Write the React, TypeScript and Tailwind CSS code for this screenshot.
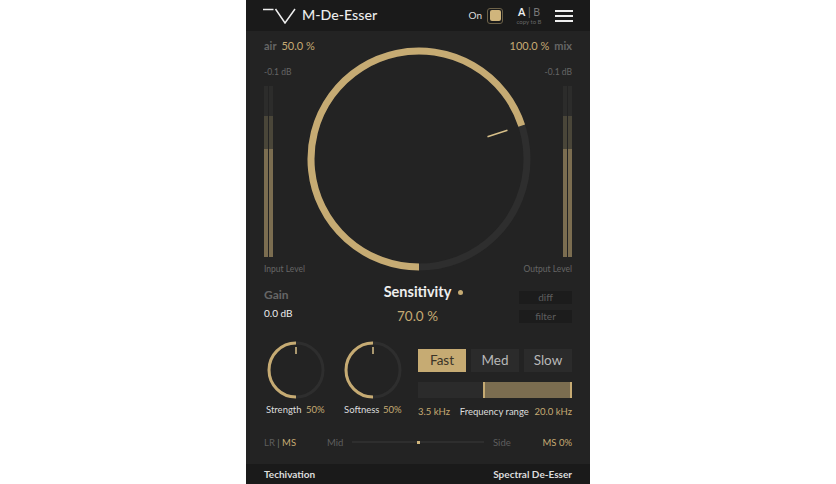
import React from 'react'

const GOLD = '#c6ab73'

// ring drawn clockwise from the bottom, value is 0..1
function Ring({ size, radius, stroke, value, track, tick }: { size: number; radius: number; stroke: number; value: number; track: string; tick: [number, number] }) {
  const c = size / 2
  const a = value * 2 * Math.PI
  const x = c - radius * Math.sin(a)
  const y = c + radius * Math.cos(a)
  const large = value > 0.5 ? 1 : 0
  const tx = (r: number) => c - r * Math.sin(a)
  const ty = (r: number) => c + r * Math.cos(a)
  return (
    <svg width={size} height={size} className="block shrink-0">
      <circle cx={c} cy={c} r={radius} fill="none" stroke={track} strokeWidth={stroke} />
      <path d={`M ${c} ${c + radius} A ${radius} ${radius} 0 ${large} 1 ${x} ${y}`} fill="none" stroke={GOLD} strokeWidth={stroke} />
      <line x1={tx(tick[0])} y1={ty(tick[0])} x2={tx(tick[1])} y2={ty(tick[1])} stroke="#d8c08a" strokeWidth={1.5} />
    </svg>
  )
}

function Meter() {
  const bar = (
    <div className="flex h-[171px] w-1 flex-col">
      <div className="h-[30px] bg-[#2c2c2b]" />
      <div className="h-[33px] bg-[#4a4639]" />
      <div className="flex-1 bg-[#7b6d50]" />
    </div>
  )
  return (
    <div className="flex gap-px">
      {bar}
      {bar}
    </div>
  )
}

function SpeedButton({ label, active }: { label: string; active?: boolean }) {
  return (
    <div className={`flex h-[23px] w-12 items-center justify-center text-[13.5px] ${active ? 'bg-[#c6ab73] text-[#3a3428]' : 'bg-[#2b2b2b] text-[#b8b8b8]'}`}>
      {label}
    </div>
  )
}

export default function App() {
  return (
    <div className="flex h-[484px] w-[836px] justify-center overflow-hidden bg-white font-['Lato','Liberation_Sans',sans-serif]">
      <div className="flex w-[344px] flex-col bg-[#232323]">
        {/* header */}
        <div className="flex h-[31px] items-center bg-[#1a1a1a] pl-[17px] pr-[17px]">
          <svg width="33" height="16" viewBox="0 0 33 16" className="shrink-0">
            <path d="M0 1.5H10.5" stroke="#eee" strokeWidth="1.5" fill="none" />
            <path d="M12.5 1 L22 15 L32 1" stroke="#eee" strokeWidth="1.5" fill="none" />
          </svg>
          <div className="ml-[6px] text-[14.2px] font-medium leading-none text-[#ececec]">M-De-Esser</div>
          <div className="ml-auto text-[10px] text-[#ddd]">On</div>
          <div className="ml-[5px] flex h-[16px] w-[16px] items-center justify-center rounded-[3px] border border-[#6d6249] bg-[#1a1a1a]">
            <div className="h-[11px] w-[11px] rounded-[2px] bg-[#d0b57c]" />
          </div>
          <div className="ml-[13px] flex w-[26px] flex-col items-center">
            <div className="text-[10.5px] leading-[12px] text-[#777]">
              <span className="font-bold text-[#eee]">A</span> | B
            </div>
            <div className="whitespace-nowrap text-[6px] leading-[8px] text-[#666]">copy to B</div>
          </div>
          <div className="ml-[13px] flex w-[18px] flex-col gap-[3px]">
            <div className="h-[2px] bg-[#eee]" />
            <div className="h-[2px] bg-[#eee]" />
            <div className="h-[2px] bg-[#eee]" />
          </div>
        </div>

        {/* main knob + meters */}
        <div className="flex justify-between px-[18px] pt-[8px]">
          <div className="relative z-10 flex w-[42px] flex-col">
            <div className="h-[14px] whitespace-nowrap text-[11px] leading-[14px]">
              <span className="font-bold text-[#666]">air</span>
              <span className="ml-[5px] text-[#c6ab73]">50.0 %</span>
            </div>
            <div className="mt-[13px] h-[12px] whitespace-nowrap text-[8.5px] leading-[12px] text-[#666]">-0.1 dB</div>
            <div className="mt-[8px]"><Meter /></div>
            <div className="mt-[6px] whitespace-nowrap text-[8.5px] leading-[12px] text-[#666]">Input Level</div>
          </div>
          <div className="pt-[8px]">
            <Ring size={224} radius={108} stroke={7} value={0.7} track="#2e2e2e" tick={[72, 93]} />
          </div>
          <div className="relative z-10 flex w-[41px] flex-col items-end">
            <div className="h-[14px] whitespace-nowrap text-[11px] leading-[14px]">
              <span className="text-[#c6ab73]">100.0 %</span>
              <span className="ml-[5px] font-bold text-[#666]">mix</span>
            </div>
            <div className="mt-[13px] h-[12px] whitespace-nowrap text-[8.5px] leading-[12px] text-[#666]">-0.1 dB</div>
            <div className="mt-[8px]"><Meter /></div>
            <div className="mt-[6px] whitespace-nowrap text-[8.5px] leading-[12px] text-[#666]">Output Level</div>
          </div>
        </div>

        {/* sensitivity row */}
        <div className="mt-[8px] flex h-[42px] justify-between px-[18px]">
          <div className="flex w-[60px] flex-col pt-[3px]">
            <div className="text-[12px] font-bold leading-[18px] text-[#666]">Gain</div>
            <div className="mt-[2px] text-[10px] leading-[14px] text-[#eee]">0.0 dB</div>
          </div>
          <div className="flex flex-col items-center pl-[4px]">
            <div className="flex items-center">
              <span className="text-[14.5px] font-bold leading-[18px] text-[#eee]">Sensitivity</span>
              <span className="ml-[7px] h-[5px] w-[5px] rounded-full bg-[#c6ab73]" />
            </div>
            <div className="mt-[6px] pr-[12px] text-[13.5px] leading-[18px] text-[#c6ab73]">70.0 %</div>
          </div>
          <div className="flex w-[53px] flex-col gap-[6px] pt-[8px]">
            <div className="flex h-[13px] items-center justify-center bg-[#1c1c1c] text-[10px] text-[#5e5e5e]">diff</div>
            <div className="flex h-[13px] items-center justify-center bg-[#1c1c1c] text-[10px] text-[#5e5e5e]">filter</div>
          </div>
        </div>

        {/* small knobs + range */}
        <div className="mt-[15px] flex px-[18px]">
          <div className="flex w-[78px] flex-col">
            <div className="pl-[2px]"><Ring size={60} radius={27} stroke={3} value={0.5} track="#2e2e2e" tick={[16, 23]} /></div>
            <div className="mt-[3px] whitespace-nowrap pl-[2px] text-[9.5px] leading-[13px] text-[#ddd]">
              Strength <span className="ml-[2px] text-[#c6ab73]">50%</span>
            </div>
          </div>
          <div className="flex w-[76px] flex-col">
            <div className="pl-[1px]"><Ring size={60} radius={27} stroke={3} value={0.5} track="#2e2e2e" tick={[16, 23]} /></div>
            <div className="mt-[3px] whitespace-nowrap pl-[2px] text-[9.5px] leading-[13px] text-[#ddd]">
              Softness <span className="ml-[1px] text-[#c6ab73]">50%</span>
            </div>
          </div>
          <div className="flex w-[154px] flex-col pt-[9px]">
            <div className="flex justify-between">
              <SpeedButton label="Fast" active />
              <SpeedButton label="Med" />
              <SpeedButton label="Slow" />
            </div>
            <div className="mt-[10px] flex h-[16px] bg-[#2b2b2b]">
              <div className="ml-[65px] flex-1 border-x-2 border-x-[#c6ab73] bg-[#7b6d50]" />
            </div>
            <div className="mt-[7px] flex justify-between whitespace-nowrap text-[9.5px] leading-[13px]">
              <span className="text-[#c6ab73]">3.5 kHz</span>
              <span className="pl-[4px] text-[#ddd]">Frequency range</span>
              <span className="text-[#c6ab73]">20.0 kHz</span>
            </div>
          </div>
        </div>

        {/* LR/MS row */}
        <div className="mt-[17px] flex h-[14px] items-center px-[18px] text-[9.5px] leading-[13px]">
          <div className="w-[63px] text-[#5e5e5e]">
            LR <span className="text-[#777]">|</span> <span className="text-[#c6ab73]">MS</span>
          </div>
          <div className="w-[25px] text-[#5e5e5e]">Mid</div>
          <div className="flex h-[2px] w-[132px] items-center justify-center bg-[#2e2e2e]">
            <div className="h-[3px] w-[3px] bg-[#d0b57c]" />
          </div>
          <div className="ml-[9px] text-[#5e5e5e]">Side</div>
          <div className="ml-auto text-[#c6ab73]">MS 0%</div>
        </div>

        {/* footer */}
        <div className="mt-auto flex h-[20px] items-center justify-between bg-[#1a1a1a] px-[18px] text-[10px] font-bold text-[#ddd]">
          <span>Techivation</span>
          <span>Spectral De-Esser</span>
        </div>
      </div>
    </div>
  )
}
